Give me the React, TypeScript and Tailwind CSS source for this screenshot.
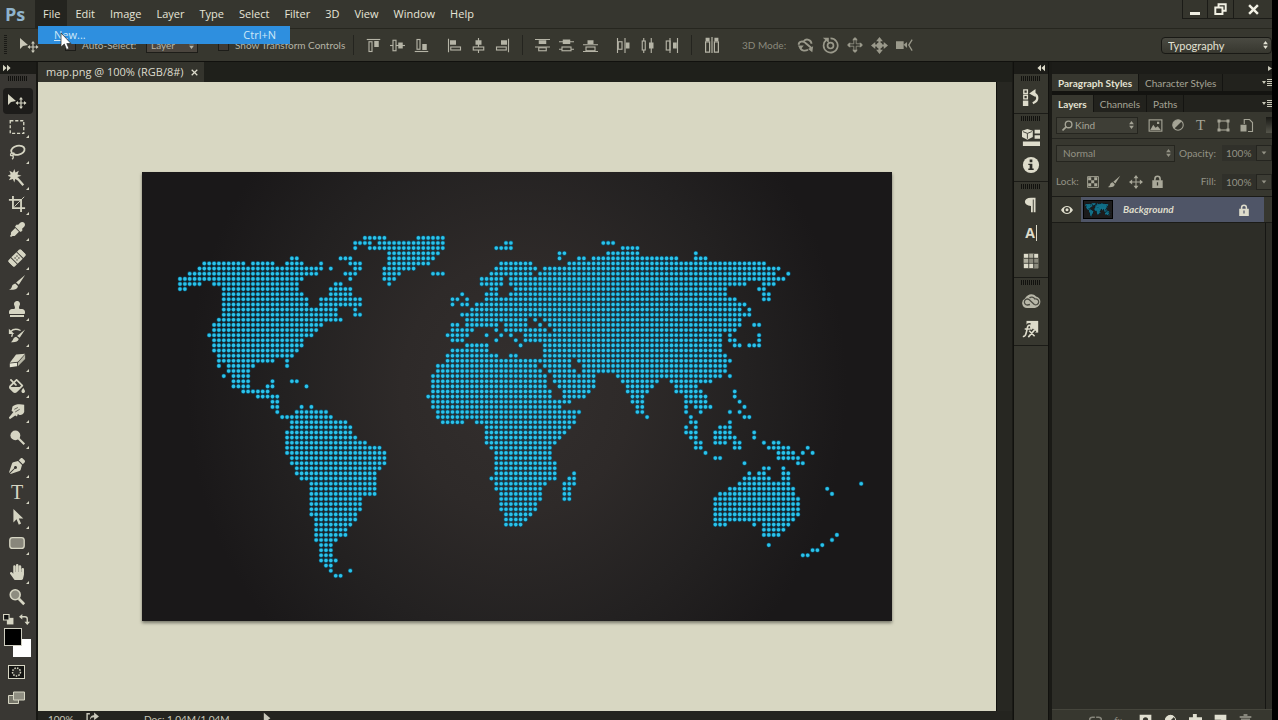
import type { ReactNode } from "react";
import clsx from "clsx";
import {
  FaBandAid,
  FaEyeDropper,
  FaFillDrip,
  FaHandPaper,
  FaPenNib,
  FaStamp,
} from "react-icons/fa";

// Dot map: one entry per row, each holding the column ranges that are land.
const LAND = [
  "38-42 49-54",
  "36-39 41-54 67-68 87-89",
  "36 39-54 65-68 91-94",
  "43-53 78-79 88-94 106",
  "23-24 33-35 43-52 78 82-83 85-102 106-108",
  "5-13 15-19 22-25 29 35-37 43-51 66-72 80-120",
  "4-29 31 36-37 42-48 65-73 75-123",
  "2-28 34-36 42-45 52-54 64-72 74-122 125",
  "0-25 35 42-44 62-66 68-124",
  "0-4 7-24 32-33 43 62-66 68-116 120-122",
  "0-1 9-24 31-35 64-65 69-112 119-120",
  "9-25 31-35 58 63-65 68-112 120-121",
  "9-26 29-37 56-57 59 63-114 120-121",
  "9-26 29-37 56 58-59 61-115 116",
  "9-32 36 60-115 117",
  "9-32 36-37 58-117",
  "8-33 59-71 73 75-115",
  "7-29 56-57 59-65 67-71 74 76-115 118-119",
  "7-28 56-60 65 67-75 77-114",
  "6-27 55-59 63 66 68 71-111 113 119",
  "7-25 56-58 65 69 71-111 113-114 119",
  "7-25 59-63 70 75-111 114-115 117-119",
  "7-24 56-63 75-111",
  "8-23 55-65 68-69 75-112",
  "8-19 22 55-80 82-113",
  "8 10-15 22 53-73 75-80 83-112",
  "10-14 53-74 76-81 83-112",
  "9 11-14 52-75 77-85 90-111 113",
  "11-14 19 23-24 52-75 77-85 91-98 101-109",
  "11-14 18-19 26 52-75 78-85 92-97 102-106",
  "13-18 52-76 79-84 92-96 102-107 114",
  "16-20 51-76 79-83 93-95 104-108 114",
  "19-20 52-80 93-95 104-108 115",
  "19-20 25 27 52-78 94-95 104 106-109 116",
  "20 24-30 53-82 94-95 104 107 113 115",
  "21-31 53-81 96 105 116-117",
  "23-34 54-58 61-81 105-106 113",
  "23-35 63-80 104 106 111-113",
  "22-35 63-79 104-106 110-113 118",
  "22-36 63-78 105-106 110-114 118",
  "22-38 63-77 106-107 110-112 114-115 120 122-123",
  "22-41 64-76 106-107 114-115 121-125 129",
  "22-42 65-76 108 123-126 128 130",
  "23-42 65-76 110-111 123-127",
  "23-42 65-77 116 127-128",
  "24-41 65-77 120-121 124",
  "24-40 65-77 81 117 119-120 124-125",
  "25-40 64-77 80-81 116-121 124-125",
  "27-40 65-75 79-81 115-125 140",
  "27-40 65-74 79-80 113-126 133",
  "27-40 66-74 79-80 111-126 134",
  "27-37 66-74 79-80 110-127",
  "27-37 66-73 110-127",
  "27-37 66-73 110-127",
  "27-36 67-72 110-127",
  "28-36 67-71 110-126",
  "28-35 67-70 110-112 118 120-125",
  "28-34 120-124",
  "28-34 120-123 135",
  "28-32 134",
  "29-31 121 132",
  "29-31 130-131",
  "29-31 128-129",
  "29-32",
  "30-31",
  "31 35",
  "32-33",
];

const MAP_PATH = LAND.map((row, r) =>
  row
    .split(" ")
    .map((range) => {
      const [from, to = from] = range.split("-").map(Number);
      let d = "";
      for (let c = from; c <= to; c++) {
        d += `M${(38 + c * 4.866).toFixed(1)} ${(65.9 + r * 5.12).toFixed(1)}h0`;
      }
      return d;
    })
    .join(""),
).join("");

function DotMap({ className }: { className?: string }) {
  return (
    <svg viewBox="0 0 750 449" className={className} role="img" aria-label="World map">
      <path d={MAP_PATH} fill="none" stroke="#0a5876" strokeWidth="4.8" strokeLinecap="round" />
      <path d={MAP_PATH} fill="none" stroke="#2cc3ea" strokeWidth="3.6" strokeLinecap="round" />
    </svg>
  );
}

function Icon({ size = 20, children }: { size?: number; children: ReactNode }) {
  return (
    <svg width={size} height={size} viewBox="0 0 20 20" fill="currentColor" aria-hidden="true">
      {children}
    </svg>
  );
}

const line = { fill: "none", stroke: "currentColor", strokeWidth: 1.5 };

const MoveIcon = () => (
  <Icon>
    <path d="M1 3v11l3-3 5-1z" />
    <path d="M14 7.500v9M9.500 12h9" {...line} strokeWidth={1.200} />
    <path d="m14 6 2 2.500h-4zM14 18l2-2.500h-4zM8.500 12l2.500-2v4zM19.500 12l-2.500-2v4z" />
  </Icon>
);

const BrushIcon = ({ size = 18 }: { size?: number }) => (
  <Icon size={size}>
    <path d="m19 1-7 11-3-2.500zM8 10.500l3 2.700c0 3-3.500 5-10 4 3-.7 3-2.500 3.500-4S6.500 11 8 10.500z" />
  </Icon>
);

const MoveCross = ({ size = 14 }: { size?: number }) => (
  <Icon size={size}>
    <path d="M10 3v14M3 10h14" {...line} />
    <path d="m10 0 3.500 4.500h-7zM10 20l3.500-4.500h-7zM0 10l4.500-3.500v7zM20 10l-4.500-3.500v7z" />
  </Icon>
);

const Lock = ({ size = 13 }: { size?: number }) => (
  <Icon size={size}>
    <path d="M6 9V6a4 4 0 0 1 8 0v3" {...line} strokeWidth={2.500} />
    <path fillRule="evenodd" d="M2 8h16v12H2zM9 11v5h2v-5z" />
  </Icon>
);

type Tool = { name: string; icon: ReactNode; single?: boolean };

const toolGroups: { height: string; tools: Tool[] }[] = [
  {
    height: "h-[154px]",
    tools: [
      { name: "Move", icon: <MoveIcon />, single: true },
      {
        name: "Rectangular Marquee",
        icon: (
          <Icon size={18}>
            <rect x="2.500" y="3" width="15" height="14" {...line} strokeDasharray="3.500 2" />
          </Icon>
        ),
      },
      {
        name: "Lasso",
        icon: (
          <Icon size={18}>
            <ellipse cx="11" cy="8" rx="7.500" ry="5" transform="rotate(-12 11 8)" {...line} strokeWidth={2} />
            <path d="M4.500 10.500c-2.500 2-2 4 0 3.500s3-2 1.500-3.500M5 14c1.500 1 1 3-.5 4" {...line} />
          </Icon>
        ),
      },
      {
        name: "Magic Wand",
        icon: (
          <Icon size={18}>
            <path d="m7 0 1.300 4L12 2l-1.500 4L15 7.500 10.500 9l1.500 4-4-2-1 4-1.500-4L1 12.500l2-3.700L-1 7.500l4-1.600L1.500 2l4 2z" />
            <path d="m10 10 7 8" {...line} strokeWidth={2.500} />
          </Icon>
        ),
      },
      {
        name: "Crop",
        icon: (
          <Icon size={18}>
            <path d="M5.500 1v13.500H19M1 5.500h13.500V19" {...line} strokeWidth={2} />
            <path d="m7 13 11-11" {...line} strokeWidth={1} />
          </Icon>
        ),
      },
      { name: "Eyedropper", icon: <FaEyeDropper size={15} /> },
    ],
  },
  {
    height: "h-[205px]",
    tools: [
      { name: "Healing Brush", icon: <FaBandAid size={18} className="-rotate-45" /> },
      { name: "Brush", icon: <BrushIcon /> },
      { name: "Clone Stamp", icon: <FaStamp size={16} /> },
      {
        name: "History Brush",
        icon: (
          <Icon size={18}>
            <path d="m19 4-6 9-3-2zM9 12l3 2.500c-1 3-4 4-9 3.500 3-1 2-5 6-6z" />
            <path d="M3 6c3-3 7-3 11-1M5 9l-1 3" {...line} />
            <path d="M1 3v6h6z" />
          </Icon>
        ),
      },
      {
        name: "Eraser",
        icon: (
          <Icon size={18}>
            <path d="m9 4 10-1-8 9-9 1z" />
            <path d="m19 4-8 9v4l8-8z" fill="#b5b4a4" />
            <path d="m2 14 8-1v4l-8 1z" fill="#e6e5d4" />
          </Icon>
        ),
      },
      { name: "Paint Bucket", icon: <FaFillDrip size={16} /> },
      {
        name: "Smudge",
        icon: (
          <Icon size={18}>
            <path d="M5 4c3-3 9-3 13-2v8c-1 3-4 4-6 3l-1-1-1 3-2-1-6 4-1-2 5-6-2-1z" />
            <path d="m7 7 4-2M8 10l5-3" stroke="#57554d" fill="none" />
          </Icon>
        ),
      },
      {
        name: "Dodge",
        icon: (
          <Icon size={17}>
            <circle cx="7.500" cy="7.500" r="5.800" />
            <path d="m11 11 7 7" {...line} strokeWidth={2.500} />
          </Icon>
        ),
      },
    ],
  },
  {
    height: "h-[103px]",
    tools: [
      { name: "Pen", icon: <FaPenNib size={16} /> },
      {
        name: "Horizontal Type",
        icon: <span className="font-['Liberation_Serif',serif] text-xl leading-5">T</span>,
      },
      {
        name: "Path Selection",
        icon: (
          <Icon size={18}>
            <path d="M6 1v15l3.500-3.500L12 18.500l2.500-1.200-2.500-5.500h5z" />
          </Icon>
        ),
      },
      {
        name: "Rounded Rectangle",
        icon: (
          <Icon size={18}>
            <rect x="2" y="4" width="16" height="12" rx="3" fill="#88867b" stroke="currentColor" strokeWidth="1.500" />
          </Icon>
        ),
      },
    ],
  },
  {
    height: "h-[51px]",
    tools: [
      { name: "Hand", icon: <FaHandPaper size={16} /> },
      {
        name: "Zoom",
        icon: (
          <Icon size={18}>
            <circle cx="8" cy="7.500" r="5.500" fill="#8d8c80" stroke="currentColor" strokeWidth="1.800" />
            <path d="m12 12 6 6" {...line} strokeWidth={3} />
          </Icon>
        ),
        single: true,
      },
    ],
  },
];

function Grip() {
  return (
    <div className="mx-auto h-[5px] w-5 bg-[repeating-linear-gradient(90deg,#11110e_0_1px,transparent_1px_2px)]" />
  );
}

const menus = ["File", "Edit", "Image", "Layer", "Type", "Select", "Filter", "3D", "View", "Window", "Help"];

function MenuBar() {
  return (
    <header className="relative flex h-7 shrink-0 items-center bg-[#36362f]">
      <h1 className="w-[35px] pl-[5px] font-['Open_Sans',sans-serif] text-lg leading-6 font-bold text-[#8fb3cc]">
        Ps
      </h1>
      <nav className="flex h-full">
        {menus.map((name) => (
          <button
            key={name}
            className={clsx(
              "h-full pr-[7px] pl-2 text-[11px] text-[#e6e5d8]",
              name === "File" && "bg-[#24241f]",
            )}
          >
            {name}
          </button>
        ))}
      </nav>
      <div className="ml-auto flex self-start border-b border-l border-[#1b1b17] bg-[#35352d] text-[#f1f0e4]">
        <button aria-label="Minimize" className="flex h-[18px] w-[25px] items-center justify-center border-r border-[#1b1b17]">
          <span className="mt-2 h-[3px] w-2.5 bg-current" />
        </button>
        <button aria-label="Restore" className="flex h-[18px] w-[26px] items-center justify-center border-r border-[#1b1b17]">
          <Icon size={13}>
            <path d="M7 6V2h11v10h-4M2 7h11v10H2z" {...line} strokeWidth={3} />
          </Icon>
        </button>
        <button aria-label="Close" className="flex h-[18px] w-[38px] items-center justify-center">
          <Icon size={11}>
            <path d="m2 2 16 16M18 2 2 18" {...line} strokeWidth={4.500} />
          </Icon>
        </button>
      </div>

      <div className="absolute top-[26px] left-[38px] z-10 w-[252px]">
        <button className="flex h-[18px] w-full items-center justify-between bg-[#2e8fdf] pr-3.5 pl-4 text-[11px] text-[#cfe8f8]">
          <span>
            <u>N</u>ew...
          </span>
          <span>Ctrl+N</span>
        </button>
        <svg viewBox="0 0 12 19" className="absolute top-1.5 left-[22px] h-[19px] w-3" aria-hidden="true">
          <path d="M1 1v14l3.300-3L6.500 17.500l2.500-1-2.200-5H11z" fill="#fff" stroke="#333" strokeWidth=".8" />
        </svg>
      </div>
    </header>
  );
}

// Align and distribute icons share the same two blocks placed along an edge.
const alignGroups: ReactNode[][] = [
  [
    <>
      <path d="M1 2h18" {...line} />
      <rect x="4" y="5" width="4" height="13" {...line} />
      <path d="M11 4h6v8h-6z" />
    </>,
    <>
      <path d="M0 10h20" {...line} />
      <rect x="4" y="3" width="4" height="14" fill="#37372f" stroke="currentColor" strokeWidth="1.500" />
      <path d="M11 6h6v8h-6z" />
    </>,
    <>
      <path d="M1 18h18" {...line} />
      <rect x="4" y="2" width="4" height="13" {...line} />
      <path d="M11 8h6v8h-6z" />
    </>,
  ],
  [
    <>
      <path d="M2 1v18" {...line} />
      <path d="M4 3h8v6H4z" />
      <rect x="5" y="12" width="13" height="4" {...line} />
    </>,
    <>
      <path d="M10 0v20" {...line} />
      <path d="M6 3h8v6H6z" />
      <rect x="3" y="12" width="14" height="4" fill="#37372f" stroke="currentColor" strokeWidth="1.500" />
    </>,
    <>
      <path d="M18 1v18" {...line} />
      <path d="M8 3h8v6H8z" />
      <rect x="2" y="12" width="13" height="4" {...line} />
    </>,
  ],
  [
    <>
      <path d="M0 2h20M0 12h20" {...line} />
      <path d="M5 3h10v5H5z" />
      <rect x="5" y="13" width="10" height="4" {...line} />
    </>,
    <>
      <path d="M0 5h20M0 15h20" {...line} />
      <path d="M5 2h10v6H5z" />
      <rect x="4" y="12" width="12" height="5" fill="#37372f" stroke="currentColor" strokeWidth="1.500" />
    </>,
    <>
      <path d="M0 9h20M0 18h20" {...line} />
      <path d="M6 3h8v5H6z" />
      <rect x="4" y="12" width="12" height="5" {...line} />
    </>,
  ],
  [
    <>
      <path d="M2 0v20M12 0v20" {...line} />
      <rect x="3" y="5" width="5" height="10" {...line} />
      <path d="M13 6h5v8h-5z" />
    </>,
    <>
      <path d="M5 0v20M15 0v20" {...line} />
      <rect x="3" y="4" width="4" height="12" fill="#37372f" stroke="currentColor" strokeWidth="1.500" />
      <path d="M12 6h6v8h-6z" />
    </>,
    <>
      <path d="M8 0v20M18 0v20" {...line} />
      <rect x="3" y="4" width="5" height="12" {...line} />
      <path d="M12 6h5v8h-5z" />
    </>,
  ],
];

function IconRow({ icons }: { icons: ReactNode[] }) {
  return (
    <div className="flex gap-[9px]">
      {icons.map((icon, i) => (
        <button key={i} aria-label="Align layers" className="w-[15px]">
          <Icon size={15}>{icon}</Icon>
        </button>
      ))}
    </div>
  );
}

const Divider = () => <div className="h-5 w-px bg-[#24241f]" />;

function UpDown() {
  return (
    <svg viewBox="0 0 6 10" className="pointer-events-none absolute top-1/2 right-1 h-2 w-[5px] -translate-y-1/2" fill="currentColor" aria-hidden="true">
      <path d="m3 0 3 4H0zM3 10 0 6h6z" />
    </svg>
  );
}

function OptionsBar() {
  return (
    <div className="flex h-[34px] shrink-0 items-center border-t border-b border-t-[#26261f] border-b-[#11110e] bg-[#37372f] font-['Lato',sans-serif] text-[10px] text-[#b5b4a6]">
      <div className="ml-1 h-5 w-[3px] bg-[repeating-linear-gradient(#1a1a16_0_1px,transparent_1px_2px)]" />
      <span className="ml-3 w-[46px] text-[#c9c8b8]">
        <MoveIcon />
      </span>
      <label className="flex w-[81px] items-center gap-1.5">
        <input type="checkbox" className="h-[11px] w-[11px] appearance-none border border-[#1d1d19] bg-[#403a34]" />
        Auto-Select:
      </label>
      <div className="relative w-[52px]">
        <select aria-label="Auto-select target" className="h-4 w-full appearance-none border border-[#1d1d19] bg-[#4b453e] pl-1">
          <option>Layer</option>
        </select>
        <UpDown />
      </div>
      <label className="ml-5 flex w-[135px] items-center gap-1.5 whitespace-nowrap">
        <input type="checkbox" className="h-[11px] w-[11px] appearance-none border border-[#1d1d19] bg-[#403a34]" />
        Show Transform Controls
      </label>
      <Divider />
      <div className="flex items-center gap-[18px] px-3">
        <IconRow icons={alignGroups[0]} />
        <IconRow icons={alignGroups[1]} />
      </div>
      <Divider />
      <div className="flex items-center gap-[18px] px-3">
        <IconRow icons={alignGroups[2]} />
        <IconRow icons={alignGroups[3]} />
      </div>
      <Divider />
      <button aria-label="Auto-align layers" className="mx-3">
        <Icon size={16}>
          <path d="M10 0v20" {...line} />
          <path d="M2 1h5v4H2zM13 1h5v4h-5z" />
          <path d="M2 6h5v13H2zM13 6h5v13h-5z" {...line} />
        </Icon>
      </button>
      <span className="ml-2.5 w-[55px] text-[#8a897c]">3D Mode:</span>
      <div className="flex gap-2 text-[#9a998b]">
        <button aria-label="Rotate 3D object">
          <Icon size={17}>
            <path d="M8 5a5 5 0 0 1 9 3M2 9c0-4 5-5 8-2l7 6M4 12c0 4 5 5 9 3" {...line} strokeWidth={2.200} />
            <path d="M1 10h7l-4 5zM19 11l-1 7-5-4z" />
          </Icon>
        </button>
        <button aria-label="Roll 3D object">
          <Icon size={17}>
            <path d="M5 3.500A8.300 8.300 0 1 0 10 1.700" {...line} strokeWidth={2} />
            <circle cx="10" cy="10" r="3.500" {...line} strokeWidth={2} />
            <path d="M1 1h7v6z" />
          </Icon>
        </button>
        <button aria-label="Drag 3D object">
          <Icon size={16}>
            <path d="M8.500 2v6.500H2v3h6.500V18h3v-6.500H18v-3h-6.500V2z" {...line} strokeWidth={1} />
            <path d="m10 0 3.500 4h-7zM10 20l3.500-4h-7zM0 10l4-3.500v7zM20 10l-4-3.500v7z" />
          </Icon>
        </button>
        <button aria-label="Slide 3D object">
          <Icon size={17}>
            <path d="m10 0 4 5h-8zM10 20l4-5H6zM0 10l5-4v8zM20 10l-5-4v8z" />
            <path d="M10 4v12M4 10h12" {...line} strokeWidth={2.500} />
            <circle cx="10" cy="10" r="3.500" />
          </Icon>
        </button>
        <button aria-label="Scale 3D object">
          <Icon size={17}>
            <path d="M0 5h9v9H0zM9 9l4-3v7z" />
            <path d="m19 3-4 6.500 4 6.500" {...line} />
          </Icon>
        </button>
      </div>
      <div className="relative ml-auto w-[111px] text-[#e2e1d3]">
        <select
          aria-label="Workspace"
          className="h-[17px] w-full appearance-none rounded-sm border border-[#191915] bg-linear-to-b from-[#4a4a42] to-[#37372f] pl-1.5 text-[11px] leading-[15px]"
        >
          <option>Typography</option>
        </select>
        <UpDown />
      </div>
    </div>
  );
}

function Toolbar() {
  return (
    <aside className="flex w-[38px] shrink-0 flex-col border-r-2 border-[#171713] bg-[#393733] text-[#d6d5c3]">
      <div className="flex h-3 shrink-0 items-center bg-[#1c1c18] pl-[3px]">
        <Icon size={8}>
          <path d="m0 2 9 8-9 8zM10 2l9 8-9 8z" />
        </Icon>
      </div>
      <div className="pt-0.5 pb-[7px]">
        <Grip />
      </div>
      <div className="flex flex-col gap-[3px]">
        {toolGroups.map((group, i) => (
          <div key={i} className={clsx("flex flex-col", group.height)}>
            {group.tools.map((tool) => (
              <button
                key={tool.name}
                aria-label={tool.name}
                className={clsx(
                  "relative mx-[3px] flex flex-1 items-center justify-center pr-0.5",
                  tool.name === "Move" && "rounded-sm bg-[#1d1c1a]",
                )}
              >
                {tool.icon}
                {!tool.single && (
                  <span className="absolute right-1 bottom-px border-b-[3px] border-l-[3px] border-b-current border-l-transparent" />
                )}
              </button>
            ))}
          </div>
        ))}
      </div>
      <div className="flex h-[18px] items-center justify-between pr-1.5 pl-[3px]">
        <button aria-label="Default colors">
          <Icon size={11}>
            <path d="M7 7h12v12H7z" />
            <path d="M1 1h10v10H1z" fill="#111" stroke="currentColor" strokeWidth="2" />
          </Icon>
        </button>
        <button aria-label="Swap colors">
          <Icon size={11}>
            <path d="M4 5h7q4 0 4 4v7" {...line} strokeWidth={2.500} />
            <path d="M0 5l6-5v10zM15 20l-5-6h10z" />
          </Icon>
        </button>
      </div>
      <div className="relative ml-1 h-[29px] w-[27px]">
        <button aria-label="Background color" className="absolute right-0 bottom-0 h-[18px] w-[18px] bg-white" />
        <button aria-label="Foreground color" className="absolute top-0 left-0 h-[18px] w-[18px] border border-[#cfcec0] bg-black" />
      </div>
      <button aria-label="Quick Mask" className="mt-2 ml-2 flex">
        <svg width="17" height="14" viewBox="0 0 17 14" aria-hidden="true">
          <rect x=".5" y=".5" width="16" height="13" fill="#151513" stroke="currentColor" />
          <circle cx="8.500" cy="7" r="4" fill="#2c2c28" stroke="currentColor" strokeWidth="1.500" strokeDasharray="1.500 1.200" />
        </svg>
      </button>
      <button aria-label="Screen Mode" className="mt-3 ml-2 flex">
        <svg width="19" height="14" viewBox="0 0 19 14" aria-hidden="true">
          <path d="M.5 4.500h10v8H.5z" fill="#77766b" stroke="currentColor" />
          <path d="M5.500 1h11v8h-11z" fill="#8f8e82" stroke="currentColor" />
        </svg>
      </button>
    </aside>
  );
}

function Document() {
  return (
    <main className="flex min-w-0 flex-1 flex-col bg-[#1f201b]">
      <div className="flex h-5 shrink-0">
        <div className="flex w-[166px] items-center justify-between bg-[#34342d] pr-1.5 pl-2 text-[11px] whitespace-nowrap text-[#dddccd]">
          map.png @ 100% (RGB/8#)
          <button aria-label="Close document">
            <Icon size={7}>
              <path d="m2 2 16 16M18 2 2 18" {...line} strokeWidth={3.500} />
            </Icon>
          </button>
        </div>
      </div>
      <div className="flex min-h-0 flex-1">
        <div className="flex min-w-0 flex-1 items-center justify-center bg-[#d8d7c2]">
          <div className="w-[750px] shrink-0 bg-[#1a1819] bg-[radial-gradient(ellipse_44%_80%_at_50%_48%,#332f2e_0%,#2e2a29_35%,#232121_70%,#1a1819_100%)] shadow-[0_2px_3px_#77776a]">
            <DotMap className="block w-full" />
          </div>
        </div>
        <div className="w-4 shrink-0 border-l border-[#11110e] bg-[#272722]" />
      </div>
      <footer className="flex h-[9px] shrink-0 items-start overflow-hidden bg-[#24241f] font-['Lato',sans-serif] text-[10px] leading-4 text-[#c9c8ba]">
        <span className="w-[47px] pl-2.5">100%</span>
        <Icon size={14}>
          <path d="M7 4H3v13h13v-4" {...line} strokeWidth={2} />
          <path d="M7 13c0-5 3-7 6-7V2l7 6-7 5V9c-3 0-5 1-6 4z" />
        </Icon>
        <span className="ml-[45px] w-[118px]">Doc: 1.04M/1.04M</span>
        <Icon size={12}>
          <path d="m3 3 11 9-11 8z" />
        </Icon>
      </footer>
    </main>
  );
}

const dockGroups: { name: string; icon: ReactNode }[][] = [
  [
    {
      name: "History",
      icon: (
        <Icon size={18}>
          <path d="M2 2h4v4H2zM2 8h4v4H2z" {...line} />
          <path d="M1 14h6v6H1z" />
          <path d="M12 17c7-3 6-9 1-11" {...line} strokeWidth={2.500} />
          <path d="m8 6 7-5v9z" />
        </Icon>
      ),
    },
  ],
  [
    {
      name: "Properties",
      icon: (
        <Icon size={18}>
          <path d="m6 1 6 2v7l-6 3-6-3V3z" />
          <path d="m1 4 5 2 5-2M6 6v6" fill="none" stroke="#37372f" />
          <path d="M14 2h6v4h-6zM14 8h6v4h-6zM1 15h19v5H1z" />
        </Icon>
      ),
    },
    {
      name: "Info",
      icon: (
        <Icon size={18}>
          <circle cx="10" cy="10" r="9" />
          <path d="M8.500 4h3v3h-3zM7 8.500h4.500V14H13v1.500H7V14h1.500v-4H7z" fill="#2c2c26" />
        </Icon>
      ),
    },
  ],
  [
    {
      name: "Paragraph",
      icon: (
        <Icon size={18}>
          <path d="M10 2h5v16h-2V4h-1v14h-2v-7C1 11 1 2 10 2z" />
        </Icon>
      ),
    },
    {
      name: "Character",
      icon: <span className="border-r border-current pr-px text-sm leading-4 font-bold">A</span>,
    },
    {
      name: "Swatches",
      icon: (
        <Icon size={18}>
          <path d="M2 2h16v16H2z" />
          <path d="M2 7h6v5H2zM8 2h5v5H8z" fill="#b0af9f" />
          <path d="M8 7h5v5H8zM13 12h5v6h-5zM13 7h5v5h-5z" fill="#8b8a7d" />
          <path d="M2 7h16M2 12.500h16M7.500 2v16M13 2v16" stroke="#37372f" fill="none" />
        </Icon>
      ),
    },
  ],
  [
    {
      name: "Creative Cloud",
      icon: (
        <svg width="21" height="16" viewBox="0 0 21 16" aria-hidden="true">
          <path d="M6 15a5 5 0 0 1-2-9.500C6 1 12-.5 15 3.500c6 1 6 10-1 11.500z" fill="#b8b7a8" />
          <path d="M9 11.500 6.500 12a3 3 0 1 1 1.800-5.300l5 4.800a3 3 0 1 0 .5-5.500c-1-2-4-2.500-5.300-1" fill="none" stroke="#4a4a41" strokeWidth="1.300" />
        </svg>
      ),
    },
    {
      name: "Styles",
      icon: (
        <Icon size={18}>
          <path d="M5 1h13v13H5z" />
          <path d="M9 6C6 5 6 9 5 13s-2 6-4 5M3 10h6M8 12l6 6M14 11l-7 8" fill="none" stroke="#37372f" strokeWidth={5} />
          <path d="M9 6C6 5 6 9 5 13s-2 6-4 5M3 10h6M8 12l6 6M14 11l-7 8" {...line} strokeWidth={1.800} />
        </Icon>
      ),
    },
  ],
];

function Dock() {
  return (
    <aside className="ml-px flex w-[36px] shrink-0 flex-col border-r border-l border-[#11110e] bg-[#37372f] text-[#dedccb]">
      <div className="flex h-3 items-center justify-end bg-[#1c1c18] pr-[3px]">
        <Icon size={8}>
          <path d="m10 2-9 8 9 8zM20 2l-9 8 9 8z" />
        </Icon>
      </div>
      {dockGroups.map((group, i) => (
        <div key={i} className="border-b border-[#1b1b17] pt-0.5 pb-0.5">
          <Grip />
          <div className="flex flex-col pt-0.5">
            {group.map((item) => (
              <button key={item.name} aria-label={item.name} className="flex h-7 items-center justify-center">
                {item.icon}
              </button>
            ))}
          </div>
        </div>
      ))}
    </aside>
  );
}

function PanelTabs({ tabs }: { tabs: string[] }) {
  return (
    <div className="flex h-[17px] bg-[#22221d]">
      {tabs.map((tab, i) => (
        <button
          key={tab}
          className={clsx(
            "border-r border-[#141411] px-1.5 leading-4 whitespace-nowrap",
            i === 0 ? "bg-[#37372f] font-bold text-[#e4e3d4]" : "text-[#a5a496]",
          )}
        >
          {tab}
        </button>
      ))}
      <button aria-label="Panel menu" className="ml-auto text-[#c9c8b8]">
        <svg width="10" height="8" viewBox="0 0 10 8" fill="currentColor" aria-hidden="true">
          <path d="M0 2h4L2 5zM5 0h5v1H5zM5 2h5v1H5zM5 4h5v1H5zM5 6h5v1H5z" />
        </svg>
      </button>
    </div>
  );
}

function Percent({ label, id }: { label: string; id: string }) {
  return (
    <div className="ml-auto flex items-center">
      <label htmlFor={id} className="pr-1.5">
        {label}
      </label>
      <input id={id} defaultValue="100%" className="h-4 w-[34px] bg-[#30302a] pl-1" />
      <button aria-label={`${label} slider`} className="flex h-4 w-4 items-center justify-center border border-[#24241f] bg-[#3c3c34]">
        <Icon size={6}>
          <path d="M2 5h16l-8 10z" />
        </Icon>
      </button>
    </div>
  );
}

function LayersPanel() {
  return (
    <aside className="ml-[3px] flex w-[220px] shrink-0 flex-col bg-[#2d2d27] font-['Lato',sans-serif] text-[10px] text-[#939285]">
      <div className="flex h-3 shrink-0 items-center justify-end bg-[#1c1c18] text-[#c9c8b8]">
        <Icon size={5}>
          <path d="m4 0 16 10L4 20z" />
        </Icon>
      </div>
      <PanelTabs tabs={["Paragraph Styles", "Character Styles"]} />
      <div className="h-1 shrink-0 bg-[#131310]" />
      <PanelTabs tabs={["Layers", "Channels", "Paths"]} />

      <div className="flex h-[27px] shrink-0 items-center border-b border-[#24241f] bg-[#37372f] pl-1 text-[#a5a496]">
        <div className="relative w-[82px]">
          <select aria-label="Filter type" className="h-[17px] w-full appearance-none border border-[#25251f] bg-[#3e3e36] pl-[18px]">
            <option>Kind</option>
          </select>
          <svg viewBox="0 0 20 20" className="pointer-events-none absolute top-[3px] left-1.5 h-[11px] w-[11px]" aria-hidden="true">
            <circle cx="12" cy="8" r="6" {...line} strokeWidth={2.500} />
            <path d="m8 12-7 7" {...line} strokeWidth={3} />
          </svg>
          <UpDown />
        </div>
        <div className="ml-2.5 flex min-w-0 flex-1 items-center gap-2 overflow-hidden">
          <button aria-label="Pixel layers" className="shrink-0">
            <Icon size={15}>
              <rect x="1.500" y="2.500" width="17" height="15" {...line} />
              <path d="m3 16 4-7 3 4 3-2 4 5zM12 5h3v3h-3z" />
            </Icon>
          </button>
          <button aria-label="Adjustment layers" className="shrink-0">
            <Icon size={14}>
              <circle cx="10" cy="10" r="7.500" {...line} />
              <path d="M15.500 4.500a7.800 7.800 0 0 0-11 11z" />
            </Icon>
          </button>
          <button aria-label="Type layers" className="w-[15px] shrink-0 font-['Liberation_Serif',serif] text-[15px] leading-4">
            T
          </button>
          <button aria-label="Shape layers" className="shrink-0">
            <Icon size={15}>
              <rect x="4" y="4" width="12" height="12" {...line} />
              <path d="M2 2h4v4H2zM14 2h4v4h-4zM2 14h4v4H2zM14 14h4v4h-4z" />
            </Icon>
          </button>
          <button aria-label="Smart objects" className="shrink-0">
            <Icon size={15}>
              <path d="M7 8V2h7l4 4v12h-6" {...line} />
              <path d="M2 9h8v9H2z" />
            </Icon>
          </button>
          <button aria-label="Toggle filter" className="ml-1 h-4 w-3 shrink-0 bg-linear-to-b from-[#191915] to-[#55554b]" />
        </div>
      </div>

      <div className="flex h-[28px] shrink-0 items-center bg-[#37372f] pl-1">
        <div className="relative w-[119px]">
          <select aria-label="Blend mode" className="h-[17px] w-full appearance-none border border-[#25251f] bg-[#3e3e36] pl-1.5">
            <option>Normal</option>
          </select>
          <UpDown />
        </div>
        <Percent label="Opacity:" id="opacity" />
      </div>

      <div className="flex h-[29px] shrink-0 items-center bg-[#37372f] pl-1">
        <span className="w-[31px]">Lock:</span>
        <div className="flex items-center gap-2 text-[#a9a899]">
          <button aria-label="Lock transparent pixels">
            <Icon size={12}>
              <path d="M1 1h18v18H1z" {...line} />
              <path d="M2 2h5v5H2zM12 2h5v5h-5zM7 7h5v5H7zM2 12h5v5H2zM12 12h5v5h-5z" />
            </Icon>
          </button>
          <button aria-label="Lock image pixels">
            <BrushIcon size={14} />
          </button>
          <button aria-label="Lock position">
            <MoveCross />
          </button>
          <button aria-label="Lock all">
            <Lock />
          </button>
        </div>
        <Percent label="Fill:" id="fill" />
      </div>

      <div className="flex h-[27px] shrink-0 items-center border-t border-b border-[#1b1b17] bg-[#37372f] pr-2 text-[#dedccb]">
        <button aria-label="Toggle visibility" className="flex w-[29px] justify-center">
          <Icon size={12}>
            <path fillRule="evenodd" d="M0 10C5 1 15 1 20 10 15 19 5 19 0 10zm10-5a5 5 0 1 0 0 10 5 5 0 0 0 0-10z" />
            <circle cx="10" cy="9.500" r="2.500" />
          </Icon>
        </button>
        <div className="flex h-full flex-1 items-center bg-[#4f5567] pl-0.5">
          <div className="w-[30px] border border-black bg-[#1c1b1c]">
            <DotMap className="block w-full opacity-60" />
          </div>
          <span className="pl-2.5 font-bold italic">Background</span>
          <span className="mr-3.5 ml-auto">
            <Lock size={12} />
          </span>
        </div>
      </div>

      <div className="mr-[6px] flex-1 border-r border-[#161613]" />

      <div className="flex h-[11px] shrink-0 items-start justify-end gap-3 overflow-hidden border-t border-[#45453c] bg-[#37372f] pt-1 pr-5 text-[#e0dfd0]">
        <span className="text-[#85847a]">
          <Icon size={13}>
            <path d="M9 13H5a4 4 0 0 1 0-8h4M11 5h4a4 4 0 0 1 0 8h-4" {...line} strokeWidth={2.500} />
          </Icon>
        </span>
        <span className="w-[13px] leading-3 text-[#85847a] italic">fx</span>
        <Icon size={13}>
          <path fillRule="evenodd" d="M1 1h18v18H1zM10 5a4 4 0 1 0 0 8 4 4 0 0 0 0-8z" />
        </Icon>
        <Icon size={13}>
          <circle cx="10" cy="10" r="8" {...line} />
          <path d="M16 4A8 8 0 0 0 4 16z" />
        </Icon>
        <Icon size={13}>
          <path d="M0 5h6V0h6v5h8v14H0z" />
        </Icon>
        <Icon size={13}>
          <path d="M1 1h18v18h-8V9H1z" />
        </Icon>
        <span className="text-[#85847a]">
          <Icon size={13}>
            <path d="M1 3h18v3H1zM7 0h6v3H7zM3 7h14v12H3z" />
          </Icon>
        </span>
      </div>
    </aside>
  );
}

export default function App() {
  return (
    <div className="h-screen overflow-hidden bg-black pr-1.5 font-['Open_Sans','Noto_Sans',sans-serif] select-none">
      <div className="flex h-full flex-col bg-[#1a1a16]">
        <MenuBar />
        <OptionsBar />
        <div className="flex min-h-0 flex-1">
          <Toolbar />
          <Document />
          <Dock />
          <LayersPanel />
        </div>
      </div>
    </div>
  );
}
